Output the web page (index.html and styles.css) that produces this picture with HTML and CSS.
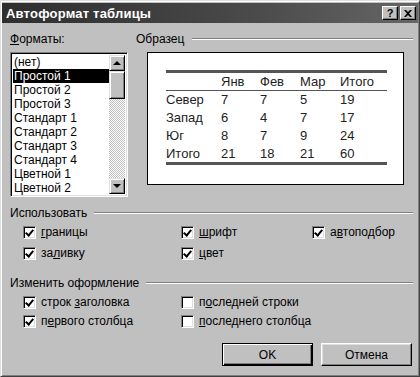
FILE: index.html
```html
<!DOCTYPE html>
<html lang="ru">
<head>
  <meta charset="UTF-8">
  <title>Автоформат таблицы</title>
  <link rel="stylesheet" href="styles.css">
</head>
<body>
  <div class="dialog">
    <div class="titlebar">
      <span class="title">Автоформат таблицы</span>
      <div class="title-buttons">
        <span class="tbtn help">?</span>
        <span class="tbtn close">
          <svg width="8" height="7" viewBox="0 0 8 7"><path d="M0 0h2l2 2 2-2h2L5 3.5 8 7H6L4 5 2 7H0l3-3.5z" fill="#000"/></svg>
        </span>
      </div>
    </div>

    <div class="content">
      <div class="top">
        <div class="formats">
          <div class="label"><u>Ф</u>орматы:</div>
          <div class="listbox">
            <ul class="items">
              <li>(нет)</li>
              <li class="selected">Простой 1</li>
              <li>Простой 2</li>
              <li>Простой 3</li>
              <li>Стандарт 1</li>
              <li>Стандарт 2</li>
              <li>Стандарт 3</li>
              <li>Стандарт 4</li>
              <li>Цветной 1</li>
              <li>Цветной 2</li>
            </ul>
            <div class="scrollbar">
              <span class="sbtn"><i class="arrow up"></i></span>
              <span class="track">
                <span class="thumb"></span>
              </span>
              <span class="sbtn"><i class="arrow down"></i></span>
            </div>
          </div>
        </div>

        <div class="sample">
          <div class="group-title">Образец</div>
          <div class="preview">
            <table class="demo">
              <tr class="head"><td></td><td>Янв</td><td>Фев</td><td>Мар</td><td>Итого</td></tr>
              <tr><td>Север</td><td>7</td><td>7</td><td>5</td><td>19</td></tr>
              <tr><td>Запад</td><td>6</td><td>4</td><td>7</td><td>17</td></tr>
              <tr><td>Юг</td><td>8</td><td>7</td><td>9</td><td>24</td></tr>
              <tr><td>Итого</td><td>21</td><td>18</td><td>21</td><td>60</td></tr>
            </table>
          </div>
        </div>
      </div>

      <div class="group-title use-title">Использовать</div>
      <div class="checks use">
        <label class="check"><span class="box on"></span><span><u>г</u>раницы</span></label>
        <label class="check"><span class="box on"></span><span><u>ш</u>рифт</span></label>
        <label class="check"><span class="box on"></span><span>а<u>в</u>топодбор</span></label>
        <label class="check"><span class="box on"></span><span>за<u>л</u>ивку</span></label>
        <label class="check"><span class="box on"></span><span><u>ц</u>вет</span></label>
      </div>

      <div class="group-title change-title">Изменить оформление</div>
      <div class="checks change">
        <label class="check"><span class="box on"></span><span>строк <u>з</u>аголовка</span></label>
        <label class="check"><span class="box"></span><span>п<u>о</u>следней строки</span></label>
        <label class="check"><span class="box on"></span><span>п<u>е</u>рвого столбца</span></label>
        <label class="check"><span class="box"></span><span><u>п</u>оследнего столбца</span></label>
      </div>

      <div class="buttons">
        <button class="btn default">OK</button>
        <button class="btn">Отмена</button>
      </div>
    </div>
  </div>
</body>
</html>
```

FILE: styles.css
```css
body {
  margin: 0;
  font-family: 'Liberation Sans', Arial, sans-serif;
  font-size: 12px;
  color: #000;
  background: #c0c0c0;
}

.dialog {
  width: 420px;
  height: 377px;
  box-sizing: border-box;
  padding: 2px;
  background: #c0c0c0;
  border: 1px solid;
  border-color: #dfdfdf #404040 #404040 #dfdfdf;
  box-shadow: inset 1px 1px #fff, inset -1px -1px #808080;
}

.titlebar {
  height: 20px;
  margin: 0 -1px 0 -1px;
  display: flex;
  align-items: center;
  justify-content: space-between;
  padding: 0 2px 0 4px;
  background: linear-gradient(to right, #2e2e2e, #4a4a4a 60%, #666);
}

.title {
  color: #fff;
  font-weight: bold;
  font-size: 13px;
  letter-spacing: 0.2px;
}

.title-buttons {
  display: flex;
  gap: 2px;
}

.tbtn {
  width: 16px;
  height: 14px;
  box-sizing: border-box;
  display: flex;
  align-items: center;
  justify-content: center;
  background: #c0c0c0;
  border: 1px solid;
  border-color: #fff #000 #000 #fff;
  box-shadow: inset -1px -1px #808080;
  font-weight: bold;
  font-size: 11px;
}

.content {
  padding: 9px 4px 0 7px;
}

.top {
  display: flex;
  gap: 8px;
}

.formats {
  width: 118px;
}

.label {
  height: 14px;
  line-height: 14px;
  margin-bottom: 6px;
}

.listbox {
  height: 145px;
  box-sizing: border-box;
  display: flex;
  background: #fff;
  border: 1px solid;
  border-color: #808080 #fff #fff #808080;
  box-shadow: inset 1px 1px #000, inset -1px -1px #dfdfdf;
  padding: 2px;
}

.items {
  list-style: none;
  margin: 0;
  padding: 0;
  flex: 1;
}

.items li {
  height: 14px;
  line-height: 14px;
  padding-left: 1px;
  white-space: nowrap;
}

.items li.selected {
  background: #000;
  color: #fff;
}

.scrollbar {
  width: 16px;
  display: flex;
  flex-direction: column;
}

.sbtn {
  width: 16px;
  height: 16px;
  box-sizing: border-box;
  display: flex;
  align-items: center;
  justify-content: center;
  background: #c0c0c0;
  border: 1px solid;
  border-color: #dfdfdf #000 #000 #dfdfdf;
  box-shadow: inset 1px 1px #fff, inset -1px -1px #808080;
}

.arrow {
  width: 0;
  height: 0;
  border-left: 4px solid transparent;
  border-right: 4px solid transparent;
}

.arrow.up {
  border-bottom: 4px solid #000;
}

.arrow.down {
  border-top: 4px solid #000;
}

.track {
  flex: 1;
  background: repeating-conic-gradient(#fff 0 25%, #c0c0c0 0 50%) 0 0 / 2px 2px;
}

.thumb {
  display: block;
  height: 28px;
  box-sizing: border-box;
  background: #c0c0c0;
  border: 1px solid;
  border-color: #dfdfdf #000 #000 #dfdfdf;
  box-shadow: inset 1px 1px #fff, inset -1px -1px #808080;
}

.sample {
  flex: 1;
}

.group-title {
  display: flex;
  align-items: center;
  height: 14px;
  line-height: 14px;
  white-space: nowrap;
}

.group-title::after {
  content: "";
  flex: 1;
  margin-left: 8px;
  border-top: 1px solid #808080;
  border-bottom: 1px solid #fff;
}

.sample .group-title {
  margin-bottom: 6px;
}

.preview {
  width: 257px;
  height: 133px;
  box-sizing: border-box;
  margin-left: 11px;
  background: #fff;
  border: 1px solid #000;
  padding: 17px 0 0 18px;
}

.demo {
  border-collapse: collapse;
  width: 221px;
  font-size: 13px;
  color: #222;
  border-top: 3px solid #555;
  border-bottom: 3px solid #555;
}

.demo td {
  padding: 0;
  height: 17.75px;
  line-height: 17px;
}

.demo td:nth-child(1) { width: 55px; }
.demo td:nth-child(2) { width: 39px; }
.demo td:nth-child(3) { width: 40px; }
.demo td:nth-child(4) { width: 40px; }

.demo .head td {
  height: 17px;
  border-bottom: 1px solid #555;
}

.use-title {
  margin-top: 9px;
}

.use-title::after {
  margin-left: 7px;
}

.checks {
  display: grid;
  padding-left: 13px;
}

.checks.use {
  grid-template-columns: 158px 131px auto;
  grid-template-rows: 18px 18px;
  row-gap: 3px;
  margin-top: 3px;
}

.checks.use .check:nth-child(4) {
  grid-column: 1;
}

.change-title {
  margin-top: 14px;
}

.change-title::after {
  margin-left: 7px;
}

.checks.change {
  grid-template-columns: 158px auto;
  grid-template-rows: 18px 18px;
  row-gap: 1px;
  margin-top: 3px;
}

.check {
  display: flex;
  align-items: center;
  gap: 5px;
  white-space: nowrap;
}

.box {
  width: 13px;
  height: 13px;
  box-sizing: border-box;
  background: #fff;
  border: 1px solid;
  border-color: #808080 #fff #fff #808080;
  box-shadow: inset 1px 1px #000, inset -1px -1px #dfdfdf;
  position: relative;
}

.box.on::after {
  content: "";
  position: absolute;
  left: 3px;
  top: 1px;
  width: 3px;
  height: 6px;
  border-right: 2px solid #000;
  border-bottom: 2px solid #000;
  transform: rotate(40deg);
}

.buttons {
  display: flex;
  justify-content: flex-end;
  gap: 8px;
  margin-top: 13px;
  padding-right: 1px;
}

.btn {
  height: 23px;
  width: 91px;
  font-family: 'Liberation Sans', Arial, sans-serif;
  font-size: 12px;
  background: #c0c0c0;
  border: 1px solid;
  border-color: #fff #000 #000 #fff;
  box-shadow: inset -1px -1px #808080, inset 1px 1px #dfdfdf;
  padding: 0;
}

.btn.default {
  width: 91px;
  border: 1px solid #000;
  box-shadow: inset 1px 1px #fff, inset -1px -1px #000, inset -2px -2px #808080;
}
```
